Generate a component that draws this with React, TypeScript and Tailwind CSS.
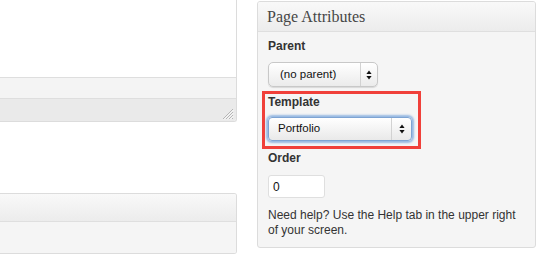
import React from "react";

function Arrows() {
  return (
    <svg width="6" height="10" viewBox="0 0 6 10" className="block">
      <path d="M3 0.5 L5.6 4 L0.4 4 Z" fill="#111" />
      <path d="M3 9.5 L5.6 6 L0.4 6 Z" fill="#111" />
    </svg>
  );
}

export default function App() {
  return (
    <div className="w-[539px] h-[257px] bg-white flex overflow-hidden font-['Liberation_Sans',Arial,sans-serif] text-[#333]">
      {/* Left column */}
      <div className="w-[237px] shrink-0 flex flex-col">
        <div className="h-[122px] border-r border-b border-[#dcdcdc] rounded-br-[3px] flex flex-col overflow-hidden">
          <div className="h-[77px] bg-white" />
          <div className="h-[21px] border-t border-[#dedede] bg-[#f4f4f4]" />
          <div className="flex-1 border-t border-[#dedede] bg-[#eaeaea] relative">
            <svg width="12" height="12" viewBox="0 0 12 12" className="absolute right-[2px] bottom-[1px]">
              <path d="M11 1 L1 11 M11 4 L4 11 M11 7 L7 11 M11 10 L10 11" stroke="#b5b5b5" strokeWidth="1" />
              <path d="M11.5 2 L2 11.5 M11.5 5 L5 11.5 M11.5 8 L8 11.5" stroke="#fff" strokeWidth="0.8" />
            </svg>
          </div>
        </div>
        <div className="mt-[71px] h-[61px] border-r border-t border-b border-[#dcdcdc] rounded-r-[3px] flex flex-col overflow-hidden">
          <div className="h-[28px] bg-gradient-to-b from-[#f9f9f9] to-[#ececec] border-b border-[#dfdfdf]" />
          <div className="flex-1 bg-[#f5f5f5]" />
        </div>
      </div>

      {/* Right panel */}
      <div className="ml-[20px] mt-px w-[279px] h-[247px] shrink-0 border border-[#dcdcdc] rounded-[3px] bg-[#f5f5f5] flex flex-col overflow-hidden">
        <div className="h-[30px] shrink-0 bg-gradient-to-b from-[#f9f9f9] to-[#ececec] border-b border-[#dfdfdf] pl-[9px] flex items-center">
          <span className="font-['Liberation_Serif',Georgia,serif] text-[16px] leading-[20px] text-[#464646] pt-[1px]">
            Page Attributes
          </span>
        </div>
        <div className="pl-[10px] pr-[10px] pt-[6px] flex flex-col">
          <div className="text-[12px] leading-[16px] font-bold text-[#333]">Parent</div>
          <div className="mt-[8px] w-[110px] h-[25px] rounded-[5px] border border-[#c8c8c8] bg-gradient-to-b from-white to-[#ebebeb] shadow-[0_1px_1px_rgba(0,0,0,0.12)] flex items-center">
            <span className="flex-1 pl-[11px] text-[11.5px] text-[#111] leading-none">(no parent)</span>
            <span className="w-[17px] h-full border-l border-[#d2d2d2] flex items-center justify-center">
              <Arrows />
            </span>
          </div>

          <div className="mt-[4px] -ml-[6px] w-[159px] h-[58px] border-[3px] border-[#f0403a] pl-[3px] flex flex-col">
            <div className="text-[12px] leading-[16px] font-bold text-[#333]">Template</div>
            <div className="mt-[7px] w-[144px] h-[24px] rounded-[4px] border border-[#7ea4d3] bg-gradient-to-b from-white to-[#e9e9e9] shadow-[0_0_2px_2px_rgba(120,165,220,0.75)] flex items-center">
              <span className="flex-1 pl-[9px] text-[11.5px] text-[#111] leading-none">Portfolio</span>
              <span className="w-[20px] h-full border-l border-[#d2d2d2] flex items-center justify-center">
                <Arrows />
              </span>
            </div>
          </div>

          <div className="mt-[1px] text-[12px] leading-[16px] font-bold text-[#333]">Order</div>
          <div className="mt-[9px] w-[57px] h-[23px] rounded-[3px] border border-[#dfdfdf] bg-white flex items-center pl-[4px] text-[12px] text-[#111]">
            0
          </div>
          <p className="mt-[10px] text-[12px] leading-[15px] text-[#333]">
            Need help? Use the Help tab in the upper right of your screen.
          </p>
        </div>
      </div>
    </div>
  );
}
